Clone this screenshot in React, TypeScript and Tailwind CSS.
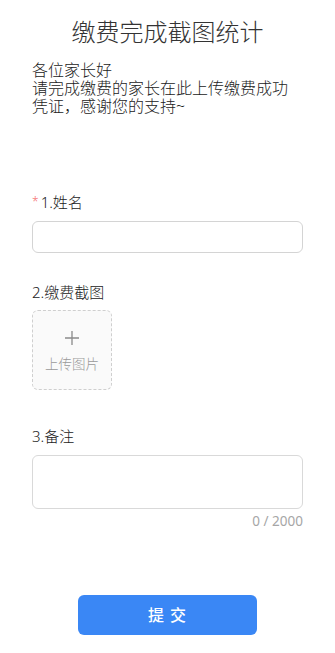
import { useState } from 'react';

export default function App() {
  const [name, setName] = useState('');
  const [note, setNote] = useState('');

  return (
    <div
      className="min-h-screen bg-white px-[32px] text-[#333]"
      style={{ fontFamily: '"Noto Sans", "Noto Sans CJK SC", sans-serif' }}
    >
      <h1 className="pt-[16px] text-center text-[24px] leading-[32px] font-light text-[#333]">缴费完成截图统计</h1>

      <div className="mt-[13px] text-[16px] leading-[18px] font-light text-[#222]">
        <p>各位家长好</p>
        <p>请完成缴费的家长在此上传缴费成功凭证，感谢您的支持~</p>
      </div>

      <form className="flex flex-col" onSubmit={e => e.preventDefault()}>
        <label className="mt-[77px] flex items-center text-[15px] leading-[20px] font-light text-[#222]">
          <span className="mr-[2px] text-[12px] text-[#f56c6c]">*</span>
          1.姓名
        </label>
        <input
          className="mt-[9px] h-[32px] w-full rounded-[6px] border border-[#d4d4d4] px-3 text-[14px] outline-none"
          value={name}
          onChange={e => setName(e.target.value)}
        />

        <label className="mt-[29px] text-[15px] leading-[20px] font-light text-[#222]">2.缴费截图</label>
        <div className="mt-[8px] flex h-[80px] w-[80px] flex-col items-center justify-center rounded-[6px] border border-dashed border-[#cfcfcf] bg-[#fafafa]">
          <svg width="16" height="16" viewBox="0 0 16 16" className="mt-[2px]">
            <path d="M8 1v14M1 8h14" stroke="#8a8a8a" strokeWidth="1.3" fill="none" />
          </svg>
          <span className="mt-[10px] text-[13.5px] leading-[16px] font-light text-[#999]">上传图片</span>
        </div>

        <label className="mt-[36px] text-[15px] leading-[20px] font-light text-[#222]">3.备注</label>
        <textarea
          className="mt-[9px] h-[54px] w-full resize-none rounded-[6px] border border-[#d9d9d9] px-3 py-1 text-[14px] outline-none"
          maxLength={2000}
          value={note}
          onChange={e => setNote(e.target.value)}
        />
        <div className="mt-[4px] text-right text-[13.5px] leading-[16px] text-[#a6a6a6]">{note.length} / 2000</div>

        <button className="mx-auto mt-[66px] h-[40px] w-[179px] rounded-[6px] bg-[#3a87f5] text-[16px] font-medium tracking-[1px] text-white">
          提 交
        </button>
      </form>
    </div>
  );
}
